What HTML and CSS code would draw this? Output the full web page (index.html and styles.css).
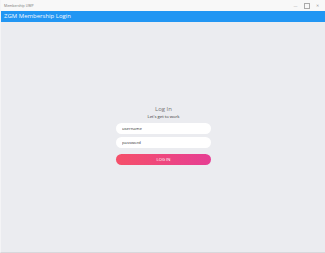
FILE: index.html
```html
<!DOCTYPE html>
<html lang="en">
<head>
  <meta charset="UTF-8">
  <title>Membership UWP</title>
  <link rel="stylesheet" href="styles.css">
</head>
<body>
  <div class="window">
    <div class="titlebar">
      <span class="title">Membership UWP</span>
      <div class="controls">
        <span class="ctl">&#8212;</span>
        <span class="ctl box"></span>
        <span class="ctl">&#10005;</span>
      </div>
    </div>
    <div class="appbar">ZGM Membership Login</div>
    <div class="main">
      <form class="login">
        <h1>Log In</h1>
        <p class="sub">Let's get to work</p>
        <input type="text" class="field" value="username">
        <input type="password" class="field pw" placeholder="password">
        <button type="button">LOG IN</button>
      </form>
    </div>
  </div>
</body>
</html>
```

FILE: styles.css
```css
* { margin: 0; padding: 0; box-sizing: border-box; }
body {
  font-family: 'Open Sans', 'Noto Sans', sans-serif;
  background: #ebecf0;
  width: 325px;
  height: 253px;
  overflow: hidden;
}
.window {
  height: 253px;
  display: flex;
  flex-direction: column;
  border-left: 1px solid #f4f4f6;
  border-bottom: 1px solid #d8d8dc;
}
.titlebar {
  height: 11px;
  background: #f8f8f8;
  display: flex;
  align-items: center;
  justify-content: space-between;
  padding-left: 3px;
}
.title { font-size: 3.5px; color: #777; }
.controls { display: flex; height: 11px; margin-right: 2px; }
.ctl {
  width: 11px;
  display: flex;
  align-items: center;
  justify-content: center;
  font-size: 4px;
  color: #999;
}
.ctl.box::before {
  content: '';
  width: 4px;
  height: 4px;
  border: 1px solid #aaa;
}
.appbar {
  height: 11px;
  background: #2196f3;
  color: #f4f9ff;
  font-size: 6px;
  line-height: 11px;
  padding-left: 3px;
}
.main {
  flex: 1;
  padding-top: 83px;
  display: flex;
  justify-content: center;
}
.login {
  width: 95px;
  display: flex;
  flex-direction: column;
  align-items: center;
  margin-left: 1px;
}
h1 {
  font-size: 6px;
  font-weight: 400;
  color: #777;
  line-height: 9px;
}
.sub {
  font-size: 4.2px;
  color: #333;
  line-height: 6px;
  margin-top: 0;
}
.field {
  width: 95px;
  height: 11px;
  margin-top: 3px;
  border: none;
  border-radius: 6px;
  background: #fff;
  font-family: inherit;
  font-size: 4.2px;
  color: #333;
  padding-left: 6px;
  outline: none;
}
.field::placeholder { color: #333; }
button {
  width: 95px;
  height: 11px;
  margin-top: 6px;
  border: none;
  border-radius: 6px;
  background: linear-gradient(90deg, #f5506a, #e63e93);
  color: #fff;
  font-family: inherit;
  font-size: 4.2px;
}
```
